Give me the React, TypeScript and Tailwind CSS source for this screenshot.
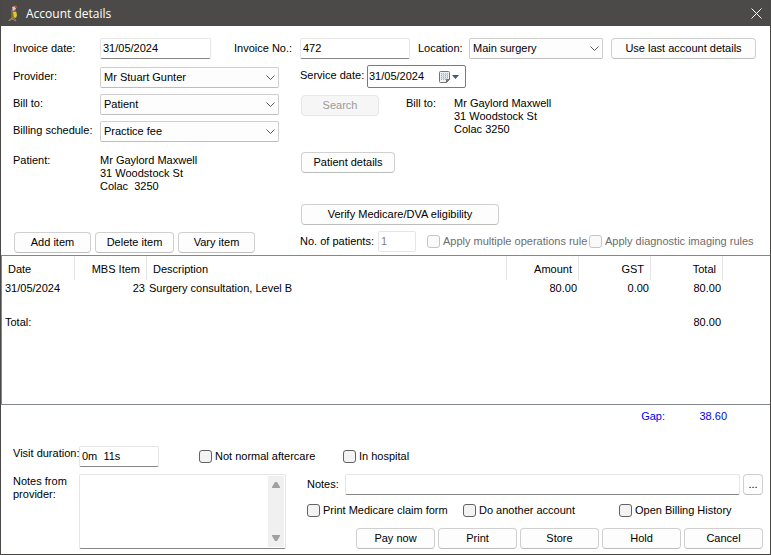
import type { ReactNode } from "react";

function Button({ children, className = "", disabled = false, label }: { children: ReactNode; className?: string; disabled?: boolean; label?: string }) {
  return (
    <button
      type="button"
      disabled={disabled}
      aria-label={label}
      className={`flex h-[21px] shrink-0 items-center justify-center whitespace-nowrap rounded border border-[#d0d0d0] border-b-[#bdbdbd] bg-[#fdfdfd] disabled:border-[#e6e6e6] disabled:bg-[#f6f6f6] disabled:text-[#9a9a9a] ${className}`}
    >
      {children}
    </button>
  );
}

function TextBox({ id, value = "", className = "", disabled = false }: { id: string; value?: string; className?: string; disabled?: boolean }) {
  return (
    <input
      id={id}
      type="text"
      defaultValue={value}
      disabled={disabled}
      className={`h-[21px] min-w-0 rounded-xs border border-[#e6e6e6] border-b-[#868686] bg-white px-0.5 pb-px outline-none disabled:border-b-[#e6e6e6] disabled:text-[#838383] ${className}`}
    />
  );
}

function Select({ id, value, className = "" }: { id: string; value: string; className?: string }) {
  return (
    <div className={`relative h-[21px] shrink-0 ${className}`}>
      <select
        id={id}
        defaultValue={value}
        className="h-full w-full appearance-none rounded-xs border border-[#d0d0d0] border-b-[#bdbdbd] bg-[#fdfdfd] pl-[3px] pr-5 outline-none"
      >
        <option>{value}</option>
      </select>
      <svg className="pointer-events-none absolute right-1 top-[7px]" width="9" height="7" viewBox="0 0 9 7" fill="none" stroke="#5c5c5c">
        <path d="M0.5 1.5 4.5 5.5 8.5 1.5" />
      </svg>
    </div>
  );
}

function Check({ id, children, className = "", disabled = false }: { id: string; children: ReactNode; className?: string; disabled?: boolean }) {
  return (
    <div className={`flex shrink-0 items-center gap-[3px] whitespace-nowrap ${className}`}>
      <input
        id={id}
        type="checkbox"
        disabled={disabled}
        className="size-[13px] shrink-0 appearance-none rounded-[3px] border border-[#626262] bg-[#f3f3f3] checked:bg-[#626262] disabled:border-[#c4c4c4] disabled:bg-[#fafafa]"
      />
      <label htmlFor={id} className={disabled ? "text-[#6d6d6d]" : ""}>
        {children}
      </label>
    </div>
  );
}

function ParrotIcon() {
  return (
    <svg width="14" height="18" viewBox="0 0 14 18" aria-hidden="true">
      <path d="M1 16 4 13 5 12 7 13 3 16Z" fill="#9a8560" />
      <path d="M7 13 9 15.500M5 14 9 16" stroke="#a08a60" fill="none" />
      <path d="M4 5 7 4 9 8 8 13 5 13 4 9Z" fill="#8c8040" />
      <path d="M4 6 5 5 6 11 4 12Z" fill="#666c48" />
      <path d="M6 7 9 6 10 10 9 13 7 12Z" fill="#e6c81e" />
      <path d="M5 5 8 4 9 7 6 7Z" fill="#9b5f70" />
      <path d="M5 2 8 1 9 4 6 6Z" fill="#d4cdc8" />
      <path d="M7 0.500H9.500L10 3H8Z" fill="#d8452a" />
    </svg>
  );
}

function CalendarIcon() {
  return (
    <svg width="20" height="12" viewBox="0 0 20 12" aria-hidden="true">
      <path d="M1.5 0.5H9.5Q10.500 0.5 10.5 1.500V8.500L7.500 11.500H1.500Q0.500 11.500 0.500 10.500V1.500Q0.500 0.500 1.500 0.500Z" fill="#f2f2f4" stroke="#77737a" />
      <path d="M2 2.500H9M2 4.500H9M2 6.500H9M2 8.500H7" stroke="#a3adc2" strokeDasharray="1 1" />
      <path d="M2 3.500H9M2 5.500H9M2 7.500H9" stroke="#d3d7e2" />
      <path d="M7.500 11.500V8.500H10.500Z" fill="#77737a" stroke="#77737a" />
      <path d="M13 4H20L16.500 8Z" fill="#3f5687" />
    </svg>
  );
}

const headCell = "border-r border-[#e5e5e5] px-1.5 pb-0 pt-0.5 font-normal";
const firstCell = "py-0 pl-[3px] pr-0";
const bodyCell = "px-0.5 py-0";

export default function App() {
  return (
    <div className="flex min-h-screen w-full flex-col border-x border-b border-[#4a4846] bg-white font-['Liberation_Sans',Arial,sans-serif] text-[11px] leading-[13px] text-black">
      <header className="flex h-[26px] shrink-0 items-center bg-[#4c4a48] pl-1.5 pr-2 pt-px text-white">
        <ParrotIcon />
        <h1 className="ml-[5px] flex-1 font-['Open_Sans','Noto_Sans',sans-serif] text-[12px] leading-4">Account details</h1>
        <button type="button" aria-label="Close">
          <svg width="11" height="11" viewBox="0 0 11 11" stroke="#ffffff" fill="none">
            <path d="M0.500 0.500 10.500 10.500M10.500 0.500 0.500 10.500" />
          </svg>
        </button>
      </header>

      <main className="flex flex-1 flex-col">
        <section className="px-3 pt-[11px]">
          <div className="flex items-center">
            <label htmlFor="invoice-date" className="w-[87px] shrink-0">Invoice date:</label>
            <TextBox id="invoice-date" value="31/05/2024" className="w-[111px]" />
            <label htmlFor="invoice-no" className="ml-[23px] w-[66px] shrink-0">Invoice No.:</label>
            <TextBox id="invoice-no" value="472" className="w-[110px]" />
            <label htmlFor="location" className="ml-2 w-[51px] shrink-0">Location:</label>
            <Select id="location" value="Main surgery" className="mt-px w-[134px]" />
            <Button className="ml-2 mt-px w-[145px]">Use last account details</Button>
          </div>

          <div className="flex pt-1.5">
            <div className="flex w-[287px] shrink-0 flex-col gap-1.5 pt-0.5">
              <div className="flex">
                <label htmlFor="provider" className="w-[87px] pt-[3px]">Provider:</label>
                <Select id="provider" value="Mr Stuart Gunter" className="w-[179px]" />
              </div>
              <div className="flex">
                <label htmlFor="bill-to" className="w-[87px] pt-[3px]">Bill to:</label>
                <Select id="bill-to" value="Patient" className="w-[179px]" />
              </div>
              <div className="flex">
                <label htmlFor="schedule" className="w-[87px] pt-[3px]">Billing schedule:</label>
                <Select id="schedule" value="Practice fee" className="w-[179px]" />
              </div>
              <dl className="flex pt-1.5">
                <dt className="w-[87px]">Patient:</dt>
                <dd>
                  Mr Gaylord Maxwell
                  <br />
                  31 Woodstock St
                  <br />
                  Colac&nbsp; 3250
                </dd>
              </dl>
              <div className="mt-auto flex gap-1 pl-px">
                <Button className="w-[77px]">Add item</Button>
                <Button className="w-[79px]">Delete item</Button>
                <Button className="w-[77px]">Vary item</Button>
              </div>
            </div>

            <div className="flex flex-1 flex-col">
              <div className="flex items-start">
                <label htmlFor="service-date" className="w-[67px] shrink-0 pt-1">Service date:</label>
                <div className="flex h-[23px] w-[99px] items-center rounded-xs border border-[#7a7a7a] pr-1.5">
                  <input id="service-date" type="text" defaultValue="31/05/2024" className="min-w-0 flex-1 pl-px outline-none" />
                  <button type="button" aria-label="Choose service date">
                    <CalendarIcon />
                  </button>
                </div>
              </div>
              <div className="flex items-start pl-px pt-[7px]">
                <Button disabled className="w-[78px]">Search</Button>
                <dl className="ml-[27px] flex pt-0.5">
                  <dt className="w-12">Bill to:</dt>
                  <dd>
                    Mr Gaylord Maxwell
                    <br />
                    31 Woodstock St
                    <br />
                    Colac 3250
                  </dd>
                </dl>
              </div>
              <Button className="ml-px mt-4 w-[94px]">Patient details</Button>
              <Button className="ml-px mt-[31px] w-[198px]">Verify Medicare/DVA eligibility</Button>
              <div className="flex pb-px pt-1.5">
                <label htmlFor="patients" className="w-[78px] shrink-0 pt-1">No. of patients:</label>
                <TextBox id="patients" value="1" disabled className="w-[38px]" />
                <Check id="operations-rule" disabled className="ml-[11px] w-[162px]">Apply multiple operations rule</Check>
                <Check id="imaging-rules" disabled>Apply diagnostic imaging rules</Check>
              </div>
            </div>
          </div>
        </section>

        <section className="mt-0.5 min-h-[150px] flex-1 border-y border-l border-[#828790]">
          <table className="w-full table-fixed border-separate border-spacing-0 whitespace-nowrap">
            <colgroup>
              <col className="w-[73px]" />
              <col className="w-[72px]" />
              <col />
              <col className="w-[72px]" />
              <col className="w-[72px]" />
              <col className="w-[72px]" />
              <col className="w-[47px]" />
            </colgroup>
            <thead>
              <tr className="h-6">
                <th className={`${headCell} text-left`}>Date</th>
                <th className={`${headCell} text-right`}>MBS Item</th>
                <th className={`${headCell} text-left`}>Description</th>
                <th className={`${headCell} text-right`}>Amount</th>
                <th className={`${headCell} text-right`}>GST</th>
                <th className={`${headCell} text-right`}>Total</th>
                <td />
              </tr>
            </thead>
            <tbody>
              <tr className="h-[17px]">
                <td className={firstCell}>31/05/2024</td>
                <td className={`${bodyCell} text-right`}>23</td>
                <td className={bodyCell}>Surgery consultation, Level B</td>
                <td className={`${bodyCell} text-right`}>80.00</td>
                <td className={`${bodyCell} text-right`}>0.00</td>
                <td className={`${bodyCell} text-right`}>80.00</td>
                <td />
              </tr>
              <tr className="h-[17px]">
                <td colSpan={7} />
              </tr>
              <tr className="h-[17px]">
                <td className={firstCell}>Total:</td>
                <td colSpan={4} />
                <td className={`${bodyCell} text-right`}>80.00</td>
                <td />
              </tr>
            </tbody>
          </table>
        </section>

        <dl className="flex justify-end pr-[43px] pt-[5px] text-[#0000ff]">
          <dt>Gap:</dt>
          <dd className="w-[62px] text-right">38.60</dd>
        </dl>

        <section className="pb-[5px] pl-3 pr-[7px] pt-[23px]">
          <div className="flex">
            <label htmlFor="duration" className="w-[66px] shrink-0 whitespace-nowrap pt-px">Visit duration:</label>
            <TextBox id="duration" value="0m  11s" className="w-20" />
            <Check id="aftercare" className="ml-10 w-36">Not normal aftercare</Check>
            <Check id="hospital">In hospital</Check>
          </div>
          <div className="flex pt-[7px]">
            <label htmlFor="provider-notes" className="w-[66px] shrink-0 pt-px">Notes from provider:</label>
            <div className="flex h-[75px] w-[207px] shrink-0 rounded-xs border border-[#e6e6e6] border-b-[#868686] p-px">
              <textarea id="provider-notes" className="min-w-0 flex-1 resize-none outline-none" />
              <div className="flex w-4 flex-col items-center justify-between bg-[#f0f0f0] py-1.5">
                <svg width="8" height="6" viewBox="0 0 8 6" fill="#a0a0a0">
                  <path d="M3 0H5L8 5V6H0V5Z" />
                </svg>
                <svg width="8" height="6" viewBox="0 0 8 6" fill="#a0a0a0">
                  <path d="M3 6H5L8 1V0H0V1Z" />
                </svg>
              </div>
            </div>
            <div className="ml-[21px] flex min-w-0 flex-1 flex-col">
              <div className="flex items-center">
                <label htmlFor="notes" className="w-[38px] shrink-0">Notes:</label>
                <TextBox id="notes" className="flex-1" />
                <Button label="More notes" className="ml-[3px] w-5">...</Button>
              </div>
              <div className="flex pt-[9px]">
                <Check id="claim-form" className="w-[156px]">Print Medicare claim form</Check>
                <Check id="another" className="w-[156px]">Do another account</Check>
                <Check id="history">Open Billing History</Check>
              </div>
              <div className="mt-auto flex justify-end gap-[3px]">
                <Button className="w-[79px]">Pay now</Button>
                <Button className="w-[79px]">Print</Button>
                <Button className="w-[79px]">Store</Button>
                <Button className="w-[79px]">Hold</Button>
                <Button className="w-[79px]">Cancel</Button>
              </div>
            </div>
          </div>
        </section>
      </main>
    </div>
  );
}
